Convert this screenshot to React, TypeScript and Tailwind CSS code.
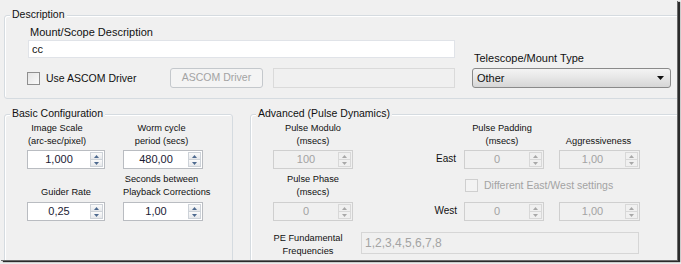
import React from 'react'

const font = { fontFamily: '"Liberation Sans", Arial, sans-serif' }

function Arrow({ up, disabled }: { up?: boolean; disabled?: boolean }) {
  return (
    <svg width="5" height="3" viewBox="0 0 5 3">
      <polygon
        points={up ? '0,3 5,3 2.5,0' : '0,0 5,0 2.5,3'}
        fill={disabled ? '#a8a8a8' : '#4e6a8f'}
      />
    </svg>
  )
}

function Spin({ value, width, disabled }: { value: string; width: string; disabled?: boolean }) {
  return (
    <div
      className={`flex h-[19px] border ${width} ${
        disabled ? 'border-[#cfcfcf] bg-[#f0f0f0]' : 'border-[#b9bcc1] bg-white'
      }`}
    >
      <div
        className={`flex flex-1 items-center justify-center text-[11px] leading-none ${
          disabled ? 'text-[#a3a3a3]' : 'text-[#1a1a33]'
        }`}
      >
        {value}
      </div>
      <div className="flex w-[14px] flex-col py-[1px] pr-[1px]">
        <div
          className={`flex h-[8px] items-center justify-center border ${
            disabled ? 'border-[#d8d8d8] bg-[#f0f0f0]' : 'border-[#cdd2d8] bg-gradient-to-b from-[#fbfbfb] to-[#e6e8eb]'
          }`}
        >
          <Arrow up disabled={disabled} />
        </div>
        <div
          className={`mt-[-1px] flex h-[8px] items-center justify-center border ${
            disabled ? 'border-[#d8d8d8] bg-[#f0f0f0]' : 'border-[#cdd2d8] bg-gradient-to-b from-[#fbfbfb] to-[#e6e8eb]'
          }`}
        >
          <Arrow disabled={disabled} />
        </div>
      </div>
    </div>
  )
}

function Label({ lines, className = '' }: { lines: string[]; className?: string }) {
  return (
    <div className={`flex h-full flex-col justify-end pb-[2px] text-center text-[9.25px] leading-[13px] text-[#111] ${className}`}>
      {lines.map((l) => (
        <div key={l} className="whitespace-nowrap">
          {l}
        </div>
      ))}
    </div>
  )
}

function Group({ title, className, children }: { title: string; className: string; children: React.ReactNode }) {
  return (
    <div className={`relative shrink-0 rounded-[3px] border border-[#d5dbe0] shadow-[inset_1px_1px_0_#ffffff] ${className}`}>
      <span className="absolute left-[5px] top-[-8px] bg-[#f0f0f0] px-[2px] text-[10.5px] leading-[13px] text-[#111]">
        {title}
      </span>
      {children}
    </div>
  )
}

function Check({ label, disabled }: { label: string; disabled?: boolean }) {
  return (
    <div className="flex items-center">
      <div
        className={`h-[13px] w-[13px] border ${
          disabled ? 'border-[#cfcfcf] bg-[#f3f3f3]' : 'border-[#8f8f8f] bg-gradient-to-br from-[#e4e4e4] to-[#fafafa]'
        }`}
      />
      <span className={`ml-[6px] text-[10.5px] ${disabled ? 'text-[#a3a3a3]' : 'text-[#111]'}`}>{label}</span>
    </div>
  )
}

export default function App() {
  return (
    <div className="h-[264px] w-[681px] bg-[#ececec]" style={font}>
      <div className="h-[260px] w-[677px] overflow-hidden bg-[#f0f0f0] shadow-[1px_1px_0_#6a6a6a,3px_2px_1px_#2a2a2a]">
        <Group title="Description" className="ml-[4px] mt-[15px] h-[84px] w-[690px]">
          <div className="flex">
            <div className="ml-[23px] w-[427px] pt-[10px]">
              <div className="pl-[2px] text-[11px] leading-[13px] text-[#111]">Mount/Scope Description</div>
              <div className="mt-[1px] flex h-[18px] items-center border border-[#e0e3e8] bg-white pl-[3px] text-[11px] text-[#111]">
                cc
              </div>
              <div className="mt-[10px] flex h-[20px] items-center">
                <div className="-ml-[1px] mt-[1px] w-[143px]">
                  <Check label="Use ASCOM Driver" />
                </div>
                <div className="flex h-[20px] w-[93px] items-center justify-center rounded-[3px] border border-[#c4c8cc] bg-[#f4f4f4] text-[10.5px] text-[#a3a3a3]">
                  ASCOM Driver
                </div>
                <div className="ml-[10px] h-[20px] flex-1 border border-[#dadada] bg-[#f0f0f0]" />
              </div>
            </div>
            <div className="ml-[17px] w-[199px] pt-[36px]">
              <div className="pl-[2px] text-[11px] leading-[13px] text-[#111]">Telescope/Mount Type</div>
              <div className="mt-[3px] flex h-[20px] items-center justify-between rounded-[3px] border border-[#8a8a8a] bg-gradient-to-b from-[#f4f4f4] via-[#e6e6e6] to-[#d6d6d6] pl-[4px] pr-[6px] text-[11px] text-[#111]">
                <span>Other</span>
                <svg width="7" height="4" viewBox="0 0 7 4">
                  <polygon points="0,0 7,0 3.5,4" fill="#111" />
                </svg>
              </div>
            </div>
          </div>
        </Group>

        <div className="mt-[15px] flex">
          <Group title="Basic Configuration" className="ml-[4px] h-[160px] w-[229px]">
            <div className="flex pt-[6px]">
              <div className="ml-[22px] flex w-[78px] flex-col">
                <div className="h-[29px]">
                  <Label lines={['Image Scale', '(arc-sec/pixel)']} className="pr-[18px]" />
                </div>
                <Spin value="1,000" width="w-[78px]" />
                <div className="h-[33px]">
                  <Label lines={['Guider Rate']} className="pb-[3px]" />
                </div>
                <Spin value="0,25" width="w-[78px]" />
              </div>
              <div className="ml-[18px] flex w-[80px] flex-col">
                <div className="h-[29px]">
                  <Label lines={['Worm cycle', 'period (secs)']} className="pr-[3px]" />
                </div>
                <Spin value="480,00" width="w-[80px]" />
                <div className="h-[33px]">
                  <Label lines={['Seconds between', 'Playback Corrections']} className="pb-[3px] pr-[3px]" />
                </div>
                <Spin value="1,00" width="w-[80px]" />
              </div>
            </div>
          </Group>

          <Group title="Advanced (Pulse Dynamics)" className="ml-[17px] h-[160px] w-[440px]">
            <div className="flex pt-[6px]">
              <div className="ml-[22px] flex w-[80px] flex-col">
                <div className="h-[29px]">
                  <Label lines={['Pulse Modulo', '(msecs)']} />
                </div>
                <Spin value="100" width="w-[80px]" disabled />
                <div className="h-[33px]">
                  <Label lines={['Pulse Phase', '(msecs)']} className="pb-[3px]" />
                </div>
                <Spin value="0" width="w-[80px]" disabled />
              </div>
              <div className="flex w-[104px] flex-col items-end text-[10px] text-[#111]">
                <div className="h-[29px]" />
                <div className="flex h-[19px] items-center pb-[3px] pr-[1px]">East</div>
                <div className="h-[33px]" />
                <div className="flex h-[19px] items-center pb-[3px]">West</div>
              </div>
              <div className="ml-[7px] flex flex-col">
                <div className="flex">
                  <div className="flex w-[80px] flex-col">
                    <div className="h-[29px]">
                      <Label lines={['Pulse Padding', '(msecs)']} className="pr-[4px]" />
                    </div>
                    <Spin value="0" width="w-[80px]" disabled />
                  </div>
                  <div className="ml-[15px] flex w-[81px] flex-col">
                    <div className="h-[29px]">
                      <Label lines={['Aggressiveness']} className="pr-[2px]" />
                    </div>
                    <Spin value="1,00" width="w-[81px]" disabled />
                  </div>
                </div>
                <div className="flex h-[33px] items-start pl-[1px] pt-[9px]">
                  <Check label="Different East/West settings" disabled />
                </div>
                <div className="flex">
                  <Spin value="0" width="w-[80px]" disabled />
                  <div className="ml-[15px]">
                    <Spin value="1,00" width="w-[81px]" disabled />
                  </div>
                </div>
              </div>
            </div>
            <div className="mt-[11px] flex">
              <div className="ml-[17px] w-[80px]">
                <Label lines={['PE Fundamental', 'Frequencies']} className="pb-0" />
              </div>
              <div className="ml-[13px] flex h-[22px] w-[278px] items-center border border-[#d6d6d6] bg-[#f0f0f0] pl-[3px] text-[12px] text-[#a3a3a3]">
                1,2,3,4,5,6,7,8
              </div>
            </div>
          </Group>
        </div>
      </div>
    </div>
  )
}
